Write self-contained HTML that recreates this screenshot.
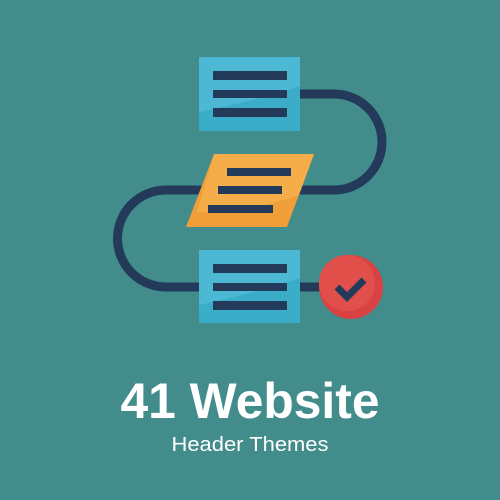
<!DOCTYPE html>
<html><head><style>html,body{margin:0;padding:0;background:#428c8c;overflow:hidden;width:500px;height:500px;}svg{display:block;}</style></head>
<body>
<svg width="500" height="500" viewBox="0 0 500 500" xmlns="http://www.w3.org/2000/svg">
<rect width="500" height="500" fill="#428c8c"/>
<path d="M300 94 H334 A48 48 0 0 1 334 190 H166 A48.5 48.5 0 0 0 166 287 H330" fill="none" stroke="#233a5a" stroke-width="9"/>
<rect x="199" y="57" width="101" height="74" fill="#3cadc9"/>
<path d="M199 57 H300 V86 Q260 100 199 112 Z" fill="#4db8d3"/>
<g fill="#233a5a">
<rect x="213" y="71" width="74" height="9"/><rect x="213" y="90" width="74" height="8"/><rect x="213" y="108" width="74" height="9"/>
</g>
<polygon points="214,154 314,154 287,227 186,227" fill="#f09e38"/>
<path d="M214 154 H314 L299 195 Q260 210 197 212 Z" fill="#f4ad48"/>
<g fill="#233a5a">
<rect x="227" y="168" width="64" height="8"/><rect x="218" y="186" width="64" height="8"/><rect x="208" y="205" width="65" height="8"/>
</g>
<rect x="199" y="250" width="101" height="73" fill="#3cadc9"/>
<path d="M199 250 H300 V278 Q260 292 199 305 Z" fill="#4db8d3"/>
<g fill="#233a5a">
<rect x="213" y="264" width="74" height="9"/><rect x="213" y="283" width="74" height="8"/><rect x="213" y="301" width="74" height="9"/>
</g>
<circle cx="351" cy="287" r="32" fill="#d94242"/>
<circle cx="347" cy="283" r="28" fill="#e14f4b"/>
<path d="M337 287 L347 297 L364 280" fill="none" stroke="#233a5a" stroke-width="7"/>
<text x="250" y="418" text-anchor="middle" font-family="Liberation Sans, sans-serif" font-weight="bold" font-size="50" fill="#fff" textLength="259" lengthAdjust="spacingAndGlyphs">41 Website</text>
<text x="250" y="451" text-anchor="middle" font-family="Liberation Sans, sans-serif" font-size="20" fill="#fff" textLength="157" lengthAdjust="spacingAndGlyphs">Header Themes</text>
</svg>
</body></html>
